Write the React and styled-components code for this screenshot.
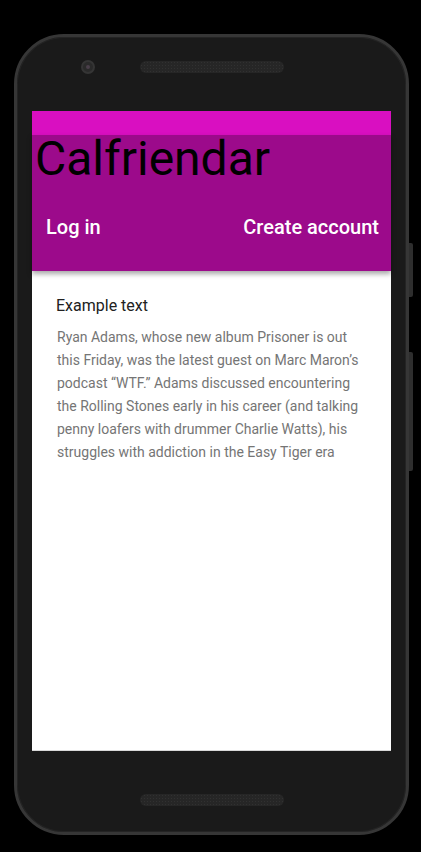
import React from "react";
import styled, { createGlobalStyle } from "styled-components";

const Global = createGlobalStyle`
  html, body { margin: 0; padding: 0; background: #000; }
  body { font-family: Roboto, "Noto Sans", sans-serif; }
  * { box-sizing: border-box; }
`;

const Stage = styled.div`
  width: 421px;
  height: 852px;
  padding: 34px 0 0 14px;
  background: #000;
  overflow: hidden;
`;

const Phone = styled.div`
  position: relative;
  width: 395px;
  height: 801px;
  border: 3px solid #363636;
  border-radius: 50px;
  background: #1a1a1a;
  box-shadow: inset 0 0 0 1px #242424;
  display: flex;
  flex-direction: column;
  align-items: center;
`;

const SideButton = styled.div`
  position: absolute;
  right: -7px;
  top: ${(p) => p.$top}px;
  width: 4px;
  height: ${(p) => p.$h}px;
  background: #2e2e2e;
  border-radius: 0 2px 2px 0;
`;

const TopBezel = styled.div`
  width: 100%;
  height: 74px;
  display: grid;
  grid-template-columns: 1fr auto 1fr;
  align-items: start;
  padding-top: 24px;
`;

const Camera = styled.div`
  justify-self: end;
  margin-right: 45px;
  margin-top: -1px;
  width: 14px;
  height: 14px;
  border-radius: 50%;
  background: #2a2a2a;
  border: 2px solid #353535;
  display: flex;
  align-items: center;
  justify-content: center;
  &::after {
    content: "";
    width: 4px;
    height: 4px;
    border-radius: 50%;
    background: #4a3f4a;
  }
`;

const Speaker = styled.div`
  width: 144px;
  height: 12px;
  border-radius: 6px;
  background-color: #262626;
  background-image: radial-gradient(circle, #313131 0.8px, transparent 1px);
  background-size: 3px 3px;
`;

const Screen = styled.div`
  width: 359px;
  height: 640px;
  background: #fff;
  display: flex;
  flex-direction: column;
  border-bottom: 1px solid #d8d8d8;
`;

const StatusBar = styled.div`
  height: 24px;
  background: #d90fc1;
`;

const AppBar = styled.header`
  height: 136px;
  background: #9c0a8b;
  box-shadow: 0 3px 5px rgba(0, 0, 0, 0.35);
  position: relative;
  z-index: 1;
  display: flex;
  flex-direction: column;
`;

const Title = styled.h1`
  margin: 0;
  padding-left: 3px;
  font-family: Roboto, sans-serif;
  font-weight: 400;
  font-size: 48px;
  line-height: 1;
  color: #000;
`;

const Actions = styled.div`
  display: flex;
  justify-content: space-between;
  padding: 0 12px 0 14px;
  margin-top: 33px;
`;

const ActionButton = styled.button`
  border: 0;
  background: none;
  padding: 0;
  font-family: Roboto, sans-serif;
  font-weight: 500;
  font-size: 20px;
  line-height: 23px;
  color: #fff;
  cursor: pointer;
`;

const Content = styled.main`
  padding: 24px 23px 0 24px;
  display: flex;
  flex-direction: column;
  gap: 10px;
`;

const Heading = styled.h2`
  margin: 0;
  font-family: Roboto, sans-serif;
  font-weight: 400;
  font-size: 16px;
  line-height: 21px;
  color: #212121;
`;

const Body = styled.p`
  margin: 0;
  padding-left: 1px;
  font-family: Roboto, sans-serif;
  font-size: 14px;
  line-height: 23px;
  color: #757575;
`;

const BottomBezel = styled.div`
  flex: 1;
  width: 100%;
  display: flex;
  justify-content: center;
  padding-top: 43px;
`;

export default function App() {
  return (
    <>
      <Global />
      <Stage>
        <Phone>
          <SideButton $top={206} $h={54} />
          <SideButton $top={315} $h={119} />
          <TopBezel>
            <Camera />
            <Speaker />
            <div />
          </TopBezel>
          <Screen>
            <StatusBar />
            <AppBar>
              <Title>Calfriendar</Title>
              <Actions>
                <ActionButton>Log in</ActionButton>
                <ActionButton>Create account</ActionButton>
              </Actions>
            </AppBar>
            <Content>
              <Heading>Example text</Heading>
              <Body>
                Ryan Adams, whose new album Prisoner is out this Friday, was the
                latest guest on Marc Maron’s podcast “WTF.” Adams discussed
                encountering the Rolling Stones early in his career (and talking
                penny loafers with drummer Charlie Watts), his struggles with
                addiction in the Easy Tiger era
              </Body>
            </Content>
          </Screen>
          <BottomBezel>
            <Speaker />
          </BottomBezel>
        </Phone>
      </Stage>
    </>
  );
}
